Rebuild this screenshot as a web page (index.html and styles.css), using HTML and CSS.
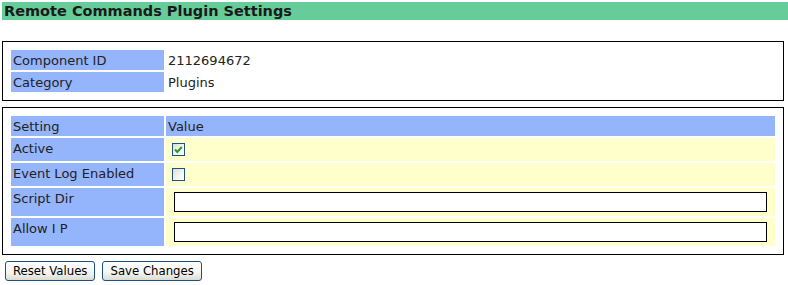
FILE: index.html
```html
<!DOCTYPE html>
<html>
<head>
<meta charset="utf-8">
<title>Remote Commands Plugin Settings</title>
<link rel="stylesheet" href="styles.css">
</head>
<body>
<h1 class="title">Remote Commands Plugin Settings</h1>

<section class="box">
  <table class="grid">
    <tr><td class="lbl">Component ID</td><td class="val">2112694672</td></tr>
    <tr><td class="lbl">Category</td><td class="val">Plugins</td></tr>
  </table>
</section>

<section class="box box-settings">
  <table class="grid">
    <tr><td class="lbl">Setting</td><td class="lbl">Value</td></tr>
    <tr>
      <td class="lbl">Active</td>
      <td class="ctl"><span class="cb"><svg width="11" height="11" viewBox="0 0 11 11"><polyline points="2,5.5 4.3,8 8.8,3" fill="none" stroke="#21a121" stroke-width="2"/></svg></span></td>
    </tr>
    <tr>
      <td class="lbl">Event Log Enabled</td>
      <td class="ctl"><span class="cb"></span></td>
    </tr>
    <tr>
      <td class="lbl">Script Dir</td>
      <td class="ctl"><input class="txt" type="text"></td>
    </tr>
    <tr>
      <td class="lbl">Allow I P</td>
      <td class="ctl"><input class="txt" type="text"></td>
    </tr>
  </table>
</section>

<div class="actions">
  <button class="btn" type="button">Reset Values</button>
  <button class="btn" type="button">Save Changes</button>
</div>
</body>
</html>
```
FILE: styles.css
```css
html, body {
  background: #ffffff;
}
body {
  margin: 2px 0 2px 2px;
  font-family: "DejaVu Sans", Verdana, sans-serif;
  font-size: 13px;
  color: #222222;
}
.title {
  margin: 0 0 21px 0;
  height: 18px;
  padding: 0 0 0 2px;
  background: #66cc99;
  font-family: "DejaVu Sans", Verdana, sans-serif;
  font-size: 14.5px;
  font-weight: bold;
  line-height: 19px;
  color: #1a1a1a;
  overflow: hidden;
  white-space: nowrap;
}
.box {
  border: 1px solid #000000;
  padding: 6px;
  margin: 0 4px 6px 0;
}
.grid {
  width: 100%;
  border-collapse: separate;
  border-spacing: 2px;
}
.grid td {
  padding: 3px 2px 2px 2px;
  line-height: 15px;
  vertical-align: top;
  white-space: nowrap;
}
.grid td.lbl {
  background: #94b4fb;
}
.grid tr td:first-child {
  width: 149px;
}
.box-settings .ctl {
  background: #ffffcc;
  padding: 2px;
}
.cb {
  display: block;
  box-sizing: border-box;
  width: 13px;
  height: 13px;
  margin: 3px 3px 3px 4px;
  border: 1px solid #1c5180;
  background: linear-gradient(135deg, #dcdcd6 0%, #f6f6f4 60%, #ffffff 100%);
}
.cb svg {
  display: block;
}
.txt {
  display: block;
  box-sizing: border-box;
  width: calc(100% - 12px);
  height: 20px;
  margin: 2px 6px;
  padding: 1px 2px;
  border: 1px solid #000000;
  background: #ffffff;
  font-family: "DejaVu Sans", Verdana, sans-serif;
  font-size: 13px;
}
.actions {
  display: flex;
  gap: 7px;
  margin-left: 3px;
}
.btn {
  box-sizing: border-box;
  height: 20px;
  padding: 0 7px;
  border: 1px solid #1c4f84;
  border-radius: 3px;
  background: linear-gradient(#ffffff 0%, #f4f4f0 60%, #dcdbd2 100%);
  font-family: "DejaVu Sans Condensed", "Liberation Sans", Arial, sans-serif;
  font-stretch: condensed;
  font-size: 13px;
  line-height: 16px;
  color: #000000;
}
```
